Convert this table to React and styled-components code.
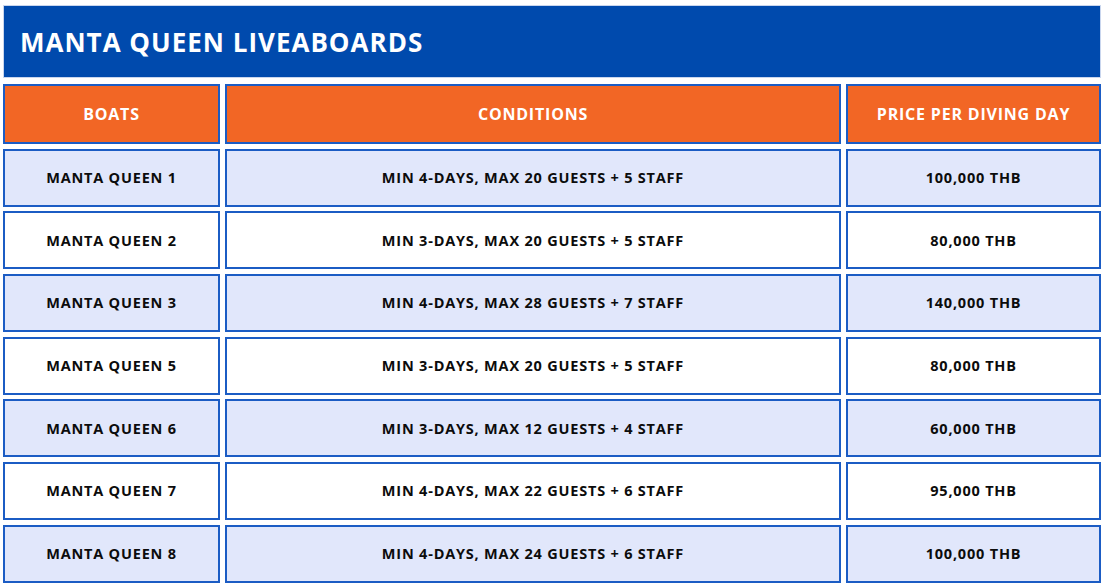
import styled, { createGlobalStyle } from "styled-components";

const GlobalStyle = createGlobalStyle`
  html, body {
    margin: 0;
    padding: 0;
    background: #ffffff;
  }
  body {
    font-family: "Open Sans", "Liberation Sans", sans-serif;
  }
`;

const Page = styled.div`
  width: 1104px;
  height: 585px;
  padding: 5px 3px 0 3px;
  box-sizing: border-box;
  display: flex;
  flex-direction: column;
`;

const TitleBar = styled.div`
  height: 73px;
  box-sizing: border-box;
  background: #004aad;
  border: 1px solid #c9d6ee;
  display: flex;
  align-items: center;
  padding-left: 16px;
  color: #ffffff;
  font-size: 26px;
  font-weight: 700;
  letter-spacing: 1px;
`;

const Grid = styled.div`
  margin-top: 6px;
  display: grid;
  grid-template-columns: 217px 616px 1fr;
  grid-template-rows: 60px;
  grid-auto-rows: 58px;
  column-gap: 5px;
  row-gap: 4.67px;
`;

const Cell = styled.div`
  box-sizing: border-box;
  border: 2px solid #1b5cc4;
  background: ${({ $head, $alt }) =>
    $head ? "#f26625" : $alt ? "#e1e7fb" : "#ffffff"};
  color: ${({ $head }) => ($head ? "#ffffff" : "#0c0c0c")};
  font-size: ${({ $head }) => ($head ? "16px" : "14.5px")};
  font-weight: 700;
  display: flex;
  align-items: center;
  justify-content: center;
  text-align: center;
  letter-spacing: 0.8px;
`;

const rows = [
  ["MANTA QUEEN 1", "MIN 4-DAYS, MAX 20 GUESTS + 5 STAFF", "100,000 THB"],
  ["MANTA QUEEN 2", "MIN 3-DAYS, MAX 20 GUESTS + 5 STAFF", "80,000 THB"],
  ["MANTA QUEEN 3", "MIN 4-DAYS, MAX 28 GUESTS + 7 STAFF", "140,000 THB"],
  ["MANTA QUEEN 5", "MIN 3-DAYS, MAX 20 GUESTS + 5 STAFF", "80,000 THB"],
  ["MANTA QUEEN 6", "MIN 3-DAYS, MAX 12 GUESTS + 4 STAFF", "60,000 THB"],
  ["MANTA QUEEN 7", "MIN 4-DAYS, MAX 22 GUESTS + 6 STAFF", "95,000 THB"],
  ["MANTA QUEEN 8", "MIN 4-DAYS, MAX 24 GUESTS + 6 STAFF", "100,000 THB"],
];

export default function App() {
  return (
    <>
      <GlobalStyle />
      <Page>
        <TitleBar>MANTA QUEEN LIVEABOARDS</TitleBar>
        <Grid>
          <Cell $head>BOATS</Cell>
          <Cell $head>CONDITIONS</Cell>
          <Cell $head>PRICE PER DIVING DAY</Cell>
          {rows.map((r, i) =>
            r.map((text, j) => (
              <Cell key={i + "-" + j} $alt={i % 2 === 0}>
                {text}
              </Cell>
            ))
          )}
        </Grid>
      </Page>
    </>
  );
}
